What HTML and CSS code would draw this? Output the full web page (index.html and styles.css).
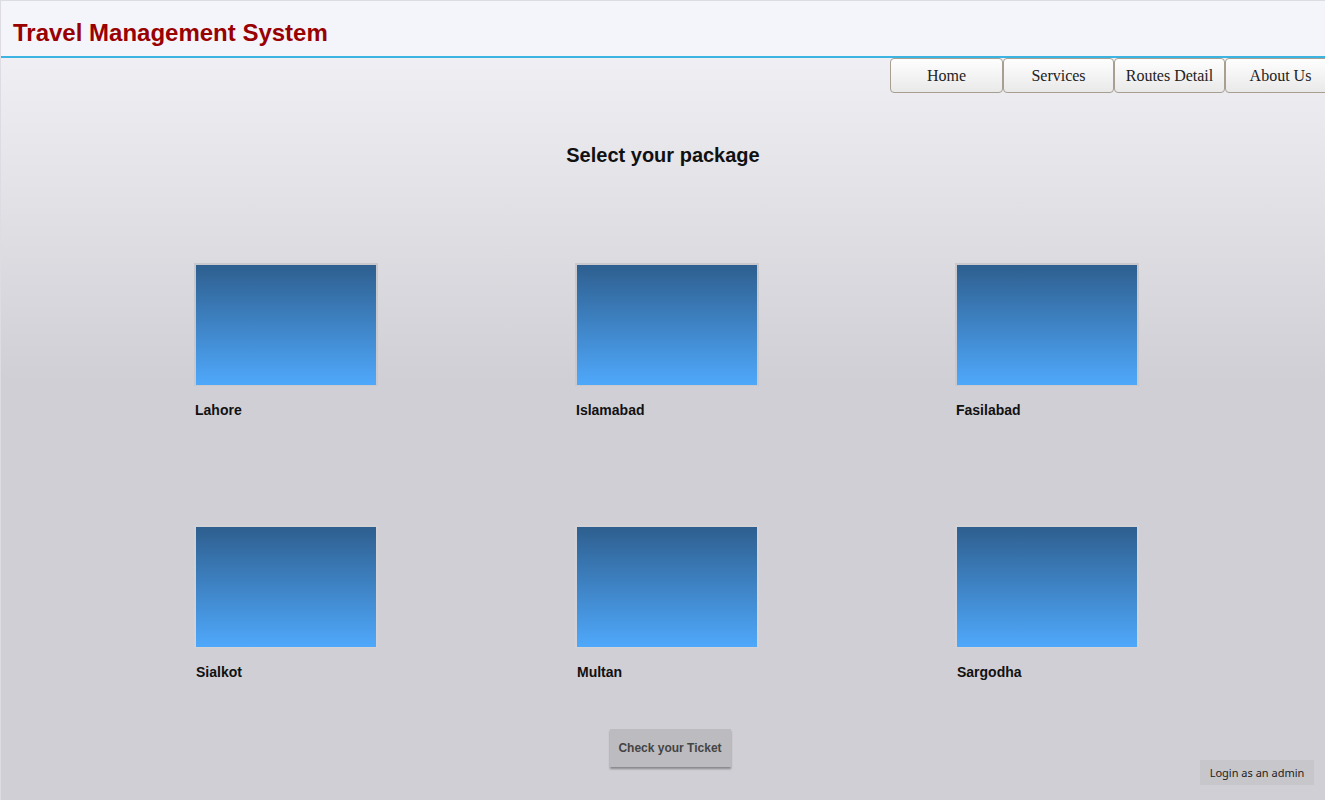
FILE: index.html
```html
<!DOCTYPE html>
<html>
<head>
<meta charset="utf-8">
<title>Travel Management System</title>
<link rel="stylesheet" href="styles.css">
</head>
<body>
<div class="page">
  <header class="header">
    <h1 class="title">Travel Management System</h1>
  </header>
  <nav class="nav">
    <a class="nav-btn w113">Home</a>
    <a class="nav-btn w111">Services</a>
    <a class="nav-btn w111">Routes Detail</a>
    <a class="nav-btn w111">About Us</a>
  </nav>
  <h2 class="heading">Select your package</h2>
  <div class="grid">
    <div class="card"><div class="pic"></div><div class="label">Lahore</div></div>
    <div class="card"><div class="pic"></div><div class="label">Islamabad</div></div>
    <div class="card"><div class="pic"></div><div class="label">Fasilabad</div></div>
    <div class="card row2"><div class="pic"></div><div class="label">Sialkot</div></div>
    <div class="card row2"><div class="pic"></div><div class="label">Multan</div></div>
    <div class="card row2"><div class="pic"></div><div class="label">Sargodha</div></div>
  </div>
  <div class="footer">
    <span></span>
    <button class="ticket">Check your Ticket</button>
    <button class="login">Login as an admin</button>
  </div>
</div>
</body>
</html>
```
FILE: styles.css
```css
* { box-sizing: border-box; }
html, body { margin: 0; padding: 0; }
body {
  font-family: "Liberation Sans", Arial, sans-serif;
  background: #d0cfd5;
}
.page {
  width: 1325px;
  height: 800px;
  overflow: hidden;
  border: 1px solid #dcdce2;
  border-bottom: 0;
  border-right: 0;
  background: linear-gradient(to bottom, #f5f5f9 0px, #d0cfd5 380px, #d0cfd5 100%);
}
.header {
  height: 57px;
  background: #f4f5fa;
  border-bottom: 2px solid #3bb4e2;
  display: flex;
  align-items: flex-end;
  padding: 0 0 9px 12px;
}
.title {
  margin: 0;
  font-size: 24px;
  font-weight: bold;
  color: #990000;
  line-height: 28px;
}
.nav {
  display: flex;
  justify-content: flex-start;
  padding-left: 889px;
  height: 35px;
}
.nav-btn {
  flex: none;
  height: 35px;
  display: flex;
  align-items: center;
  justify-content: center;
  padding-top: 1px;
  font-family: "Liberation Serif", "Times New Roman", serif;
  font-size: 16px;
  color: #222;
  background: linear-gradient(to bottom, #fefefe, #e9e9e9);
  border: 1px solid #a89e92;
  border-radius: 4px;
}
.w113 { width: 113px; }
.w111 { width: 111px; }
.heading {
  margin: 51px 0 0;
  text-align: center;
  font-size: 20px;
  line-height: 23px;
  font-weight: bold;
  color: #111;
}
.grid {
  margin-top: 96px;
  padding-left: 193px;
  display: grid;
  grid-template-columns: 381px 380px 381px;
  row-gap: 107px;
}
.card {
  display: flex;
  flex-direction: column;
  align-items: flex-start;
}
.pic {
  width: 184px;
  height: 123px;
  border: 2px solid #c9c8cc;
  border-bottom-width: 1px;
  background: linear-gradient(to bottom, #2e5f8f, #4fa8fb);
}
.row2 .pic { border-color: #d3d2d7; }
.label {
  margin-top: 16px;
  padding-left: 1px;
  font-size: 14px;
  line-height: 16px;
  font-weight: bold;
  color: #111;
}
.row2 .label { padding-left: 2px; }
.footer {
  margin-top: 49px;
  display: grid;
  grid-template-columns: 1fr auto 1fr;
  align-items: start;
}
.ticket {
  width: 121px;
  height: 38px;
  border: 0;
  background: #bcbbbf;
  box-shadow: 0 2px 2px rgba(0, 0, 0, 0.35);
  font-family: "Liberation Sans", Arial, sans-serif;
  font-size: 12px;
  font-weight: bold;
  color: #444;
  padding: 0;
  margin-left: 14px;
}
.login {
  justify-self: end;
  margin: 31px 11px 0 0;
  width: 114px;
  height: 25px;
  border: 0;
  background: #c7c6ca;
  font-family: "Noto Sans", "DejaVu Sans", sans-serif;
  font-size: 11px;
  color: #222;
  padding: 0;
}
```
